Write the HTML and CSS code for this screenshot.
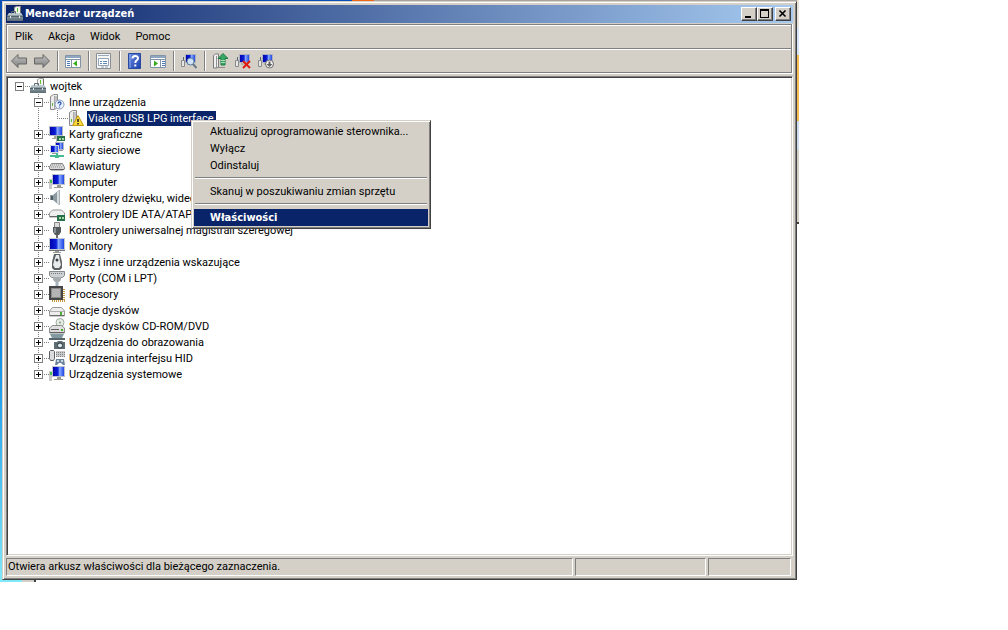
FILE: index.html
```html
<!DOCTYPE html>
<html lang="pl">
  <head>
    <meta charset="UTF-8" />
    <meta name="viewport" content="width=device-width, initial-scale=1.0" />
    <title>Menedżer urządzeń</title>
    <link rel="stylesheet" href="styles.css">
  </head>
  <body>
    <!-- Icon set, 16x16 each -->
    <svg class="sprite" aria-hidden="true">
      <defs>
        <linearGradient id="g-screen" x1="0" y1="0" x2="1" y2="0">
          <stop offset="0" stop-color="#0000a8" />
          <stop offset="0.45" stop-color="#0a20d8" />
          <stop offset="0.6" stop-color="#86a8ff" />
          <stop offset="1" stop-color="#1438e0" />
        </linearGradient>
        <linearGradient id="g-metal" x1="0" y1="0" x2="1" y2="0">
          <stop offset="0" stop-color="#f4f4f4" />
          <stop offset="1" stop-color="#8c9090" />
        </linearGradient>
        <linearGradient id="g-case" x1="0" y1="0" x2="0" y2="1">
          <stop offset="0" stop-color="#a9b8be" />
          <stop offset="1" stop-color="#5b6c74" />
        </linearGradient>
        <linearGradient id="g-arrow" x1="0" y1="0" x2="0" y2="1">
          <stop offset="0" stop-color="#c4c4c4" />
          <stop offset="1" stop-color="#7e7e7e" />
        </linearGradient>
        <linearGradient id="g-help" x1="0" y1="0" x2="1" y2="1">
          <stop offset="0" stop-color="#6b8be0" />
          <stop offset="1" stop-color="#1a3fae" />
        </linearGradient>
      </defs>

      <symbol id="i-tower" viewBox="0 0 16 16">
        <path d="M1.500 2.500l3-2h4v13l-3 2h-4z" fill="#ececec" stroke="#8a8a8a" />
        <path d="M5.500 2v13" stroke="#a8a8a8" />
        <path d="M6 2h2v11H6z" fill="#c4c4c4" />
        <rect x="3" y="9" width="1" height="3" fill="#58c030" />
      </symbol>
      <symbol id="i-monitor" viewBox="0 0 16 16">
        <rect x="0.500" y="0.500" width="15" height="11" fill="url(#g-screen)" stroke="#c4c8d0" />
        <path d="M0 12.500h16" stroke="#70757c" />
        <path d="M6 13h4v1h2v1H4v-1h2z" fill="#9a9a90" />
      </symbol>
      <symbol id="i-root" viewBox="0 0 16 16">
        <path d="M7.500 7V1.500l2-1h4v8h-6z" fill="#f4f4f0" stroke="#a0a09c" />
        <path d="M13.500 1v8" stroke="#70706c" />
        <rect x="10" y="2" width="1" height="4" fill="#5cc62e" />
        <path d="M0 10l2-3h12l2 3v5H0z" fill="url(#g-case)" />
        <path d="M2 7h12l1 2H1z" fill="#bccace" />
        <path d="M0 10.500h16" stroke="#52636b" />
        <path d="M3 10h1v2H3zM12 10h1v2h-1z" fill="#e4eaec" />
        <path d="M4.500 7.500v-2h4v2" fill="none" stroke="#5a686e" />
      </symbol>
      <symbol id="i-unknown" viewBox="0 0 16 16">
        <use href="#i-tower" />
        <circle cx="10.500" cy="10.500" r="4.500" fill="#eef4ff" stroke="#8b9bb8" />
        <path d="M9 9.500c0-2 3-2 3 0 0 1-1.500 1-1.500 2M10.500 12.500v1" fill="none" stroke="#2858b8" stroke-width="1.300" />
      </symbol>
      <symbol id="i-warning" viewBox="0 0 16 16">
        <use href="#i-tower" />
        <path d="M10 5.500l5.500 10h-11z" fill="#ffd83a" stroke="#c09a10" />
        <path d="M10 9v3M10 13v1.500" stroke="#222" stroke-width="1.500" />
      </symbol>
      <symbol id="i-display" viewBox="0 0 16 16">
        <rect x="0.500" y="0.500" width="13" height="9" fill="url(#g-screen)" stroke="#b8bcc4" />
        <path d="M5 10h4v2H5zM3 12h5v1H3z" fill="#a5a59a" />
        <path d="M8 10h8v5H8z" fill="#26704c" />
        <path d="M10 12h2v2h-2zM13 12h2v2h-2z" fill="#a9d8a0" />
        <path d="M7.500 9v7" stroke="#b9b9b9" />
      </symbol>
      <symbol id="i-network" viewBox="0 0 16 16">
        <rect x="6.500" y="0.500" width="8" height="7" fill="url(#g-screen)" stroke="#b0b8c8" />
        <rect x="1.500" y="3.500" width="8" height="7" fill="url(#g-screen)" stroke="#d0d6e4" />
        <path d="M10 8h4v1h-4zM3 11h5v1H3z" fill="#9b9b93" />
        <path d="M7 11h2v2h6v2h-5v1H6v-1H1v-2h6z" fill="#45bb92" />
      </symbol>
      <symbol id="i-keyboard" viewBox="0 0 16 16">
        <path d="M2.500 5.500h11l2 4v1.500l-2 1h-11l-2-1V9z" fill="#d8d8d8" stroke="#858585" />
        <path d="M3 7h10M2 9h12" stroke="#8b8b8b" stroke-dasharray="1 1" />
        <path d="M1 11.500h14" stroke="#5c5c5c" />
      </symbol>
      <symbol id="i-computer" viewBox="0 0 16 16">
        <path d="M0 5h3v10H0z" fill="#c8c8c8" />
        <rect x="1" y="6" width="2" height="3" fill="#4cc04c" />
        <rect x="3.500" y="0.500" width="12" height="10" fill="url(#g-screen)" stroke="#c0c4cc" />
        <path d="M8 11h4v2h2v1H5v-1h3z" fill="#9a9a90" />
      </symbol>
      <symbol id="i-sound" viewBox="0 0 16 16">
        <path d="M1 5h3l6-5v15l-6-5H1z" fill="#8d9ba0" />
        <path d="M8 2l2-2v15l-2-2z" fill="#d6dcde" />
        <path d="M10.500 0v15" stroke="#a8b2b6" />
        <path d="M2 6h2v4H2z" fill="#4f5c62" />
      </symbol>
      <symbol id="i-ide" viewBox="0 0 16 16">
        <path d="M0.500 7l3-3h9l3 3v4h-15z" fill="#efefef" stroke="#9a9a9a" />
        <path d="M1 10.500h9" stroke="#666" />
        <path d="M8 9h8v6H8z" fill="#26704c" />
        <path d="M10 11h2v2h-2zM13 11h2v2h-2z" fill="#a9d8a0" />
      </symbol>
      <symbol id="i-usb" viewBox="0 0 16 16">
        <path d="M5.500 0.500h5v5h-5z" fill="#dcdcdc" stroke="#858585" />
        <path d="M4 5h8v5l-2 3H6l-2-3z" fill="#555a5c" />
        <path d="M5 6h2v5H5z" fill="#8b9194" />
        <path d="M8 13v3" stroke="#6a6a6a" stroke-width="2" />
      </symbol>
      <symbol id="i-mouse" viewBox="0 0 16 16">
        <path d="M5 0h6l2 8v6l-2 2H5l-2-2V8z" fill="#5c6264" />
        <path d="M7 1h3l1 6 1 4-2 3H6l-2-3 1-4z" fill="#e8ebec" />
        <circle cx="8" cy="6" r="1.500" fill="#384044" />
      </symbol>
      <symbol id="i-port" viewBox="0 0 16 16">
        <path d="M0.500 1.500h15v4l-2 2h-11l-2-2z" fill="#cdd1d2" stroke="#848a8c" />
        <path d="M2 3.500h12" stroke="#747a7c" stroke-dasharray="1 1" />
        <path d="M4 7h8v3l-2 2H6l-2-2z" fill="#a7acae" />
        <path d="M8 12v4" stroke="#a5b4c0" stroke-width="3" />
      </symbol>
      <symbol id="i-cpu" viewBox="0 0 16 16">
        <path d="M3 15h13M15 3v12" stroke="#c69a40" stroke-width="2" stroke-dasharray="1 1" />
        <path d="M0 0h14v14H0z" fill="#454545" />
        <path d="M2 2h10v10H2z" fill="#8a8a8a" />
        <path d="M3 3h8v8H3z" fill="#b4b4b4" />
      </symbol>
      <symbol id="i-disk" viewBox="0 0 16 16">
        <path d="M0.500 9l3-3.500h9l3 3.500v5h-15z" fill="#ededed" stroke="#9a9a9a" />
        <path d="M1 9.500h14" stroke="#b0b0b0" />
        <path d="M1 13.500h14" stroke="#6b6b6b" />
        <rect x="11" y="10" width="2" height="3" fill="#4cae30" />
      </symbol>
      <symbol id="i-cd" viewBox="0 0 16 16">
        <circle cx="11" cy="4.500" r="4" fill="#e4eee4" stroke="#a0a8a0" />
        <circle cx="11" cy="4.500" r="1" fill="#889088" />
        <path d="M0.500 10l3-2.500h9l3 2.500v5h-15z" fill="#dedede" stroke="#8b8b8b" />
        <path d="M2 11.500h8M1 14.500h14" stroke="#606060" />
        <rect x="12" y="11" width="2" height="2" fill="#4cae30" />
      </symbol>
      <symbol id="i-imaging" viewBox="0 0 16 16">
        <path d="M1 0h14l-2 4H3z" fill="#8399a2" />
        <path d="M0 4h16v2H0z" fill="#56666c" />
        <path d="M5 8h3l1-1h4l1 1h2v7H5z" fill="#5e6d72" />
        <circle cx="11" cy="11.500" r="2.500" fill="#dbe8ec" stroke="#303a3e" />
      </symbol>
      <symbol id="i-hid" viewBox="0 0 16 16">
        <path d="M0.500 1.500l1-1h3l1 1v7l-1 2h-3l-1-2z" fill="#dcdcdc" stroke="#5c6062" />
        <path d="M7 1h9v6H7z" fill="#c8cacc" />
        <path d="M7 2.500h9M7 4.500h9M7 6.500h9" stroke="#808486" stroke-dasharray="1 1" />
        <path d="M7 9h8l1 6h-2l-2-2h-2l-2 2H6z" fill="#6e8498" />
        <path d="M8 10h2v2H8zM12 10h2v2h-2z" fill="#c6d8e6" />
      </symbol>

      <symbol id="i-back" viewBox="0 0 16 16">
        <path d="M0.500 8L7 1.500v3.500h8.500v6H7v3.500z" fill="url(#g-arrow)" stroke="#666" />
      </symbol>
      <symbol id="i-forward" viewBox="0 0 16 16">
        <path d="M15.500 8L9 1.500v3.500H0.500v6H9v3.500z" fill="url(#g-arrow)" stroke="#666" />
      </symbol>
      <symbol id="i-panel-left" viewBox="0 0 16 16">
        <path d="M0.500 2.500h15v12h-15z" fill="#fff" stroke="#8294a8" />
        <path d="M1 3h14v2H1z" fill="#8fa6c0" />
        <path d="M1 6.500h14M6.500 7v7" stroke="#8294a8" />
        <path d="M2 8.500h3M2 10.500h3M2 12.500h3" stroke="#4a78b8" />
        <path d="M12 7.500v6l-4-3z" fill="#35ad1c" />
      </symbol>
      <symbol id="i-panel-right" viewBox="0 0 16 16">
        <path d="M0.500 2.500h15v12h-15z" fill="#fff" stroke="#8294a8" />
        <path d="M1 3h14v2H1z" fill="#8fa6c0" />
        <path d="M1 6.500h14M10.500 7v7" stroke="#8294a8" />
        <path d="M12 8.500h3M12 10.500h3M12 12.500h3" stroke="#4a78b8" />
        <path d="M4 7.500v6l4-3z" fill="#35ad1c" />
      </symbol>
      <symbol id="i-props" viewBox="0 0 16 16">
        <path d="M0.500 0.500h14v15h-14z" fill="#f6f6f6" stroke="#8a8f96" />
        <path d="M2 2.500h11" stroke="#9aa8b8" />
        <path d="M2.500 5.500h10v7h-10z" fill="#fff" stroke="#94a4b6" />
        <path d="M4 8.500h2M4 10.500h2M7 8.500h4M7 10.500h4" stroke="#5f88b8" />
        <path d="M5 14h3M9 14h3" stroke="#94a4b6" />
      </symbol>
      <symbol id="i-help" viewBox="0 0 16 16">
        <path d="M1.500 0.500h12v15h-12z" fill="url(#g-help)" stroke="#274a9e" />
        <path d="M3 1v14" stroke="#8ea8e8" />
        <path d="M5.500 5.500c0-3.500 5.500-3.300 5.500-0.300 0 2.300-2.700 2-2.700 4.800M8.300 11.500v2" fill="none" stroke="#fff" stroke-width="2" />
      </symbol>
      <symbol id="i-mini-pc" viewBox="0 0 16 16">
        <path d="M0.500 7.500h3v6h-3z" fill="#e8e8e8" stroke="#8a8a8a" />
        <path d="M2.500 4v3" stroke="#567" />
        <rect x="4.500" y="1.500" width="10" height="8" fill="url(#g-screen)" stroke="#aab0bc" />
        <path d="M6 11h7" stroke="#b8b8b0" stroke-width="2" />
      </symbol>
      <symbol id="i-scan" viewBox="0 0 16 16">
        <use href="#i-mini-pc" />
        <circle cx="9.500" cy="8.500" r="3.500" fill="#cfe4fa" stroke="#587aa0" />
        <path d="M12 11l3.500 4" stroke="#687888" stroke-width="2" />
      </symbol>
      <symbol id="i-update" viewBox="0 0 16 16">
        <path d="M1.500 2.500l2-1.500h3v13l-2 1h-3z" fill="#f0f0f0" stroke="#7c7c7c" />
        <path d="M4.500 3v12M5 14.500h8" stroke="#909090" />
        <path d="M11 0.500l5 5h-3V12H9V5.500H6z" fill="#39a866" stroke="#1c7a40" />
        <path d="M9 7.500h4M9 9.500h4" stroke="#a4e0bc" />
      </symbol>
      <symbol id="i-uninstall" viewBox="0 0 16 16">
        <use href="#i-mini-pc" />
        <path d="M8 8l7 7M15 8l-7 7" stroke="#e01c10" stroke-width="2" />
      </symbol>
      <symbol id="i-disable" viewBox="0 0 16 16">
        <use href="#i-mini-pc" />
        <circle cx="11.500" cy="11" r="4" fill="#f4f4f4" stroke="#6d6d6d" />
        <path d="M10.500 8.500h2V11h2l-3 3-3-3h2z" fill="#606060" />
      </symbol>
    </svg>

    <div class="desktop">
      <main class="window">
        <header class="titlebar">
          <svg class="icon"><use href="#i-root" /></svg>
          <h1>Menedżer urządzeń</h1>
          <div class="caption-buttons">
            <button type="button" class="caption" aria-label="Minimalizuj">
              <svg viewBox="0 0 12 10"><path d="M2 7h6v2H2z" /></svg>
            </button>
            <button type="button" class="caption" aria-label="Maksymalizuj">
              <svg viewBox="0 0 12 10"><path d="M1 0h9v9H1zM2 2v6h7V2z" fill-rule="evenodd" /></svg>
            </button>
            <button type="button" class="caption close" aria-label="Zamknij">
              <svg viewBox="0 0 12 10"><path d="M2.500 1.500l6 6M8.500 1.500l-6 6" stroke="#000" stroke-width="1.600" /></svg>
            </button>
          </div>
        </header>

        <div class="bands">
          <nav class="menubar">
            <button type="button">Plik</button>
            <button type="button">Akcja</button>
            <button type="button">Widok</button>
            <button type="button">Pomoc</button>
          </nav>
          <div class="toolbar">
            <button type="button" aria-label="Wstecz"><svg class="icon"><use href="#i-back" /></svg></button>
            <button type="button" aria-label="Dalej"><svg class="icon"><use href="#i-forward" /></svg></button>
            <span class="divider"></span>
            <button type="button" aria-label="Drzewo konsoli"><svg class="icon"><use href="#i-panel-left" /></svg></button>
            <span class="divider"></span>
            <button type="button" aria-label="Właściwości"><svg class="icon"><use href="#i-props" /></svg></button>
            <span class="divider"></span>
            <button type="button" aria-label="Pomoc"><svg class="icon"><use href="#i-help" /></svg></button>
            <button type="button" aria-label="Okienko akcji"><svg class="icon"><use href="#i-panel-right" /></svg></button>
            <span class="divider"></span>
            <button type="button" aria-label="Skanuj"><svg class="icon"><use href="#i-scan" /></svg></button>
            <span class="divider"></span>
            <button type="button" aria-label="Aktualizuj"><svg class="icon"><use href="#i-update" /></svg></button>
            <button type="button" aria-label="Odinstaluj"><svg class="icon"><use href="#i-uninstall" /></svg></button>
            <button type="button" aria-label="Wyłącz"><svg class="icon"><use href="#i-disable" /></svg></button>
          </div>
        </div>

        <section class="pane">
          <ul class="tree">
            <li>
              <div class="node">
                <button type="button" class="toggle open" aria-label="Zwiń"></button>
                <svg class="icon"><use href="#i-root" /></svg>
                <span class="label">wojtek</span>
              </div>
              <ul class="branch">
                <li>
                  <div class="node">
                    <button type="button" class="toggle open" aria-label="Zwiń"></button>
                    <svg class="icon"><use href="#i-unknown" /></svg>
                    <span class="label">Inne urządzenia</span>
                  </div>
                  <ul class="branch">
                    <li>
                      <div class="node leaf">
                        <svg class="icon"><use href="#i-warning" /></svg>
                        <span class="label selected">Viaken USB LPG interface</span>
                      </div>
                    </li>
                  </ul>
                </li>
                <li>
                  <div class="node">
                    <button type="button" class="toggle" aria-label="Rozwiń"></button>
                    <svg class="icon"><use href="#i-display" /></svg>
                    <span class="label">Karty graficzne</span>
                  </div>
                </li>
                <li>
                  <div class="node">
                    <button type="button" class="toggle" aria-label="Rozwiń"></button>
                    <svg class="icon"><use href="#i-network" /></svg>
                    <span class="label">Karty sieciowe</span>
                  </div>
                </li>
                <li>
                  <div class="node">
                    <button type="button" class="toggle" aria-label="Rozwiń"></button>
                    <svg class="icon"><use href="#i-keyboard" /></svg>
                    <span class="label">Klawiatury</span>
                  </div>
                </li>
                <li>
                  <div class="node">
                    <button type="button" class="toggle" aria-label="Rozwiń"></button>
                    <svg class="icon"><use href="#i-computer" /></svg>
                    <span class="label">Komputer</span>
                  </div>
                </li>
                <li>
                  <div class="node">
                    <button type="button" class="toggle" aria-label="Rozwiń"></button>
                    <svg class="icon"><use href="#i-sound" /></svg>
                    <span class="label">Kontrolery dźwięku, wideo i gier</span>
                  </div>
                </li>
                <li>
                  <div class="node">
                    <button type="button" class="toggle" aria-label="Rozwiń"></button>
                    <svg class="icon"><use href="#i-ide" /></svg>
                    <span class="label">Kontrolery IDE ATA/ATAPI</span>
                  </div>
                </li>
                <li>
                  <div class="node">
                    <button type="button" class="toggle" aria-label="Rozwiń"></button>
                    <svg class="icon"><use href="#i-usb" /></svg>
                    <span class="label">Kontrolery uniwersalnej magistrali szeregowej</span>
                  </div>
                </li>
                <li>
                  <div class="node">
                    <button type="button" class="toggle" aria-label="Rozwiń"></button>
                    <svg class="icon"><use href="#i-monitor" /></svg>
                    <span class="label">Monitory</span>
                  </div>
                </li>
                <li>
                  <div class="node">
                    <button type="button" class="toggle" aria-label="Rozwiń"></button>
                    <svg class="icon"><use href="#i-mouse" /></svg>
                    <span class="label">Mysz i inne urządzenia wskazujące</span>
                  </div>
                </li>
                <li>
                  <div class="node">
                    <button type="button" class="toggle" aria-label="Rozwiń"></button>
                    <svg class="icon"><use href="#i-port" /></svg>
                    <span class="label">Porty (COM i LPT)</span>
                  </div>
                </li>
                <li>
                  <div class="node">
                    <button type="button" class="toggle" aria-label="Rozwiń"></button>
                    <svg class="icon"><use href="#i-cpu" /></svg>
                    <span class="label">Procesory</span>
                  </div>
                </li>
                <li>
                  <div class="node">
                    <button type="button" class="toggle" aria-label="Rozwiń"></button>
                    <svg class="icon"><use href="#i-disk" /></svg>
                    <span class="label">Stacje dysków</span>
                  </div>
                </li>
                <li>
                  <div class="node">
                    <button type="button" class="toggle" aria-label="Rozwiń"></button>
                    <svg class="icon"><use href="#i-cd" /></svg>
                    <span class="label">Stacje dysków CD-ROM/DVD</span>
                  </div>
                </li>
                <li>
                  <div class="node">
                    <button type="button" class="toggle" aria-label="Rozwiń"></button>
                    <svg class="icon"><use href="#i-imaging" /></svg>
                    <span class="label">Urządzenia do obrazowania</span>
                  </div>
                </li>
                <li>
                  <div class="node">
                    <button type="button" class="toggle" aria-label="Rozwiń"></button>
                    <svg class="icon"><use href="#i-hid" /></svg>
                    <span class="label">Urządzenia interfejsu HID</span>
                  </div>
                </li>
                <li>
                  <div class="node">
                    <button type="button" class="toggle" aria-label="Rozwiń"></button>
                    <svg class="icon"><use href="#i-computer" /></svg>
                    <span class="label">Urządzenia systemowe</span>
                  </div>
                </li>
              </ul>
            </li>
          </ul>

          <div class="context-menu">
            <button type="button">Aktualizuj oprogramowanie sterownika...</button>
            <button type="button">Wyłącz</button>
            <button type="button">Odinstaluj</button>
            <hr />
            <button type="button">Skanuj w poszukiwaniu zmian sprzętu</button>
            <hr />
            <button type="button" class="active">Właściwości</button>
          </div>
        </section>

        <footer class="statusbar">
          <span class="status-text">Otwiera arkusz właściwości dla bieżącego zaznaczenia.</span>
          <span></span>
          <span></span>
        </footer>
      </main>
    </div>
  </body>
</html>
```
FILE: styles.css
```css
* {
  box-sizing: border-box;
}
body {
  margin: 0;
  background-color: #fff;
  color: #000;
  font-family: Roboto, Tahoma, sans-serif;
  font-size: 11px;
  line-height: 16px;
}
button {
  margin: 0;
  padding: 0;
  border: none;
  background: none;
  color: inherit;
  font: inherit;
}
ul {
  list-style: none;
  margin: 0;
  padding: 0;
}
.sprite {
  position: absolute;
  width: 0;
  height: 0;
}
.icon {
  width: 16px;
  height: 16px;
  flex: none;
  display: block;
}

/* What shows of the desktop round the window */
.desktop {
  display: flex;
  height: calc(100vh - 48px);
  min-height: 400px;
  margin-right: 209px;
  padding: 1px 2px 2px;
  background:
    linear-gradient(#e8e4dc 0 28px, #d4e4f8 28px 55px, #f8bc50 55px 121px, #cfdcf0 121px 150px, #d4d0c8 150px 222px, #404040 222px 224px) right top / 2px 224px no-repeat,
    linear-gradient(90deg, #0a50b4 0 352px, #f06818 352px 374px, #a8a49c 374px) left top / 100% 1px no-repeat,
    linear-gradient(#0a50b4, #1090e8 60%, #80e8f8) left top / 2px 100% no-repeat,
    linear-gradient(90deg, #80e8f8 0 22px, #d4d0c8 22px 34px, #404040 34px) left bottom / 36px 2px no-repeat;
}
.window {
  flex: 1;
  min-width: 0;
  display: flex;
  flex-direction: column;
  padding: 3px;
  background-color: #d4d0c8;
  border: 1px solid;
  border-color: #d4d0c8 #404040 #404040 #d4d0c8;
  box-shadow: inset 1px 1px #fff, inset -1px -1px #808080;
}

.titlebar {
  display: flex;
  align-items: center;
  height: 18px;
  padding: 0 2px 0 1px;
  background: linear-gradient(90deg, #0a246a, #a6caf0);
  color: #fff;
}
.titlebar h1 {
  margin: 0 0 0 2px;
  font-family: "DejaVu Sans Condensed", Tahoma, sans-serif;
  font-size: 11px;
  font-weight: bold;
}
.caption-buttons {
  display: flex;
  margin-left: auto;
}
.caption {
  width: 16px;
  height: 14px;
  padding: 1px;
  background-color: #d4d0c8;
  border: 1px solid;
  border-color: #fff #404040 #404040 #fff;
  box-shadow: inset -1px -1px #808080;
}
.caption svg {
  display: block;
  width: 12px;
  height: 10px;
}
.close {
  margin-left: 2px;
}

.bands {
  margin: 1px 0 2px;
  border-right: 1px solid #fff;
  border-bottom: 1px solid #fff;
}
.menubar,
.toolbar {
  display: flex;
  align-items: center;
  height: 25px;
  border: 1px solid #808080;
  box-shadow: inset 1px 1px #fff;
}
.menubar {
  gap: 15px;
  padding-left: 8px;
}
.toolbar {
  height: 24px;
  border-top: none;
  padding-left: 1px;
}
.toolbar button {
  width: 23px;
  height: 22px;
  padding: 3px;
}
.divider {
  width: 2px;
  height: 20px;
  margin: 0 3px;
  border-left: 1px solid #808080;
  border-right: 1px solid #fff;
}

.pane {
  position: relative;
  flex: 1;
  min-height: 0;
  background-color: #fff;
  border: 1px solid;
  border-color: #808080 #fff #fff #808080;
  box-shadow: inset 1px 1px #404040, inset -1px -1px #d4d0c8;
  padding: 1px;
}
.tree {
  padding-left: 7px;
}
/* Dotted guide lines */
.branch > li {
  background: repeating-linear-gradient(#808080 0 1px, transparent 1px 2px) 4px 0 / 1px 100% no-repeat;
}
.branch > li:last-child {
  background-size: 1px 8px;
}
.node {
  display: flex;
  align-items: center;
  height: 16px;
  white-space: nowrap;
  background: repeating-linear-gradient(90deg, #808080 0 1px, transparent 1px 2px) 4px 8px / 12px 1px no-repeat;
}
.branch {
  padding-left: 19px;
}
.leaf {
  padding-left: 15px;
}
.toggle {
  flex: none;
  width: 9px;
  height: 9px;
  margin-right: 6px;
  background:
    linear-gradient(#000, #000) center / 5px 1px no-repeat,
    linear-gradient(#000, #000) center / 1px 5px no-repeat,
    #fff;
  border: 1px solid #808080;
}
.toggle.open {
  background:
    linear-gradient(#000, #000) center / 5px 1px no-repeat,
    #fff;
}
.label {
  margin-left: 3px;
  padding: 0 2px 0 1px;
  line-height: 15px;
}
.selected {
  background-color: #0a246a;
  color: #fff;
}

.context-menu {
  position: absolute;
  left: 184px;
  top: 43px;
  width: 240px;
  padding: 2px;
  background-color: #d4d0c8;
  border: 1px solid;
  border-color: #d4d0c8 #404040 #404040 #d4d0c8;
  box-shadow: inset 1px 1px #fff, inset -1px -1px #808080;
}
.context-menu button {
  display: block;
  width: 100%;
  height: 17px;
  padding-left: 16px;
  line-height: 17px;
  text-align: left;
  white-space: nowrap;
}
.context-menu hr {
  height: 2px;
  margin: 3px 1px 4px;
  border: none;
  border-top: 1px solid #808080;
  border-bottom: 1px solid #fff;
}
.context-menu .active {
  background-color: #0a246a;
  color: #fff;
  font-family: "DejaVu Sans Condensed", Tahoma, sans-serif;
  font-weight: bold;
}

.statusbar {
  display: grid;
  grid-template-columns: 1fr 131px 83px;
  gap: 2px;
  height: 18px;
  margin: 2px 2px 0 0;
}
.statusbar span {
  border: 1px solid;
  border-color: #808080 #fff #fff #808080;
  padding-left: 1px;
  overflow: hidden;
  white-space: nowrap;
}
```
